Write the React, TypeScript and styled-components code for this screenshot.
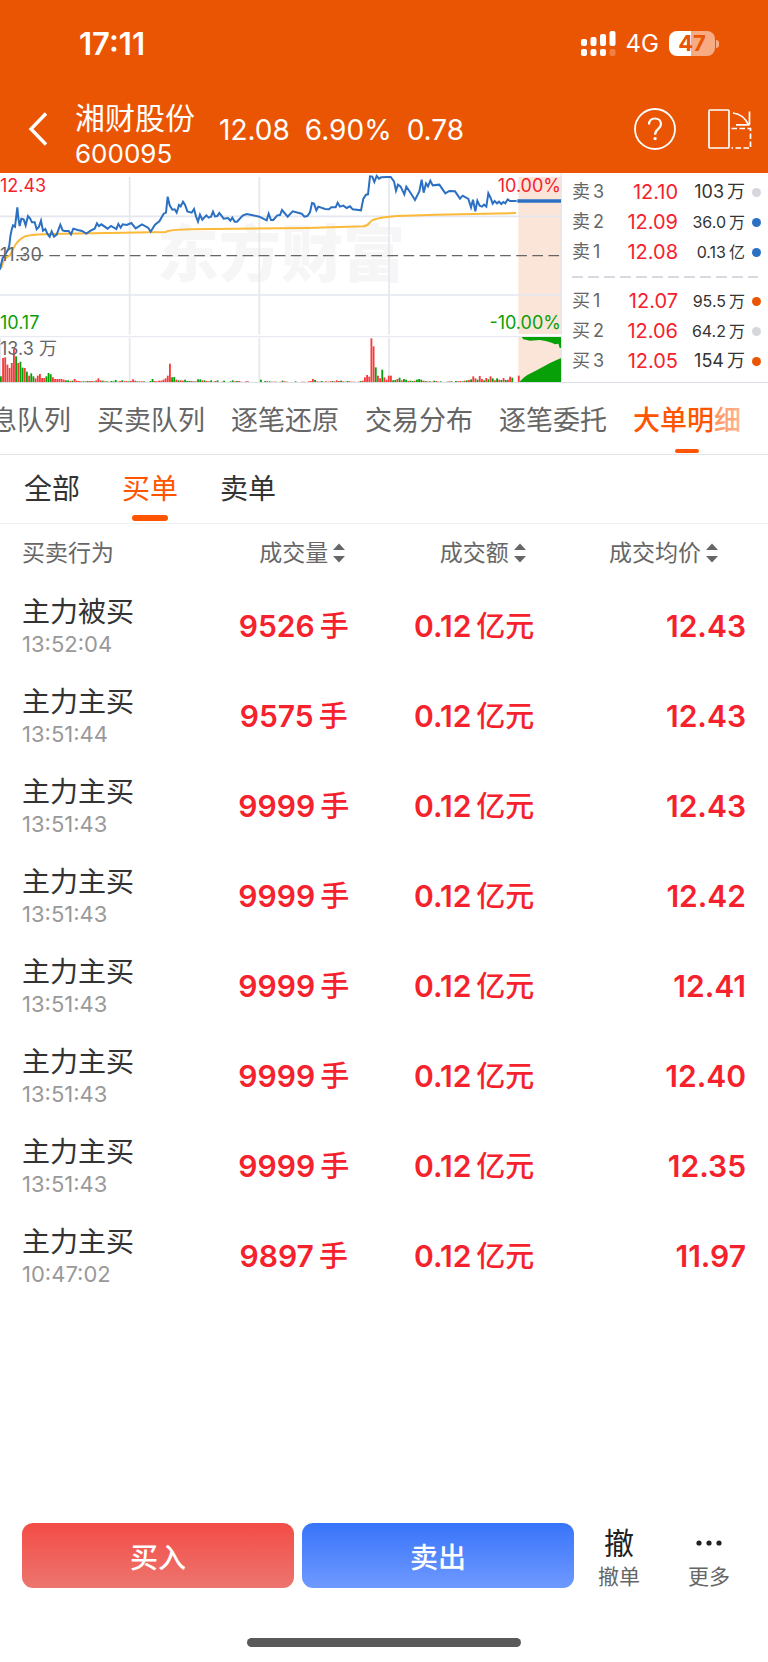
import React, { useState } from "react";
import styled, { createGlobalStyle } from "styled-components";

const RED = "#f5222d";
const GREEN = "#08a008";
const ORANGE = "#ff5500";
const BRAND = "#ea5504";
const BLUE = "#2b70c2";

const GlobalStyle = createGlobalStyle`
  * { box-sizing: border-box; }
  body {
    margin: 0;
    background: #fff;
    color: #333;
    font-family: Inter, "Noto Sans CJK SC", sans-serif;
  }
  button {
    font: inherit;
    color: inherit;
    border: 0;
    padding: 0;
    margin: 0;
    background: none;
    cursor: pointer;
  }
`;

const Page = styled.div`
  min-height: 100vh;
  display: flex;
  flex-direction: column;
  background: #fff;
  overflow: hidden;
`;

/* ---------- header ---------- */

const Header = styled.header`
  background: ${BRAND};
  color: #fff;
`;

const StatusBar = styled.div`
  height: 87px;
  padding: 0 49px 0 79px;
  display: flex;
  align-items: center;
  justify-content: space-between;
`;

const Clock = styled.time`
  font-size: 31px;
  font-weight: 600;
`;

const StatusIcons = styled.div`
  display: flex;
  align-items: center;
  gap: 10px;
  font-size: 24px;
`;

const Battery = styled.div`
  display: flex;
  align-items: center;
  gap: 1px;
`;

const BatteryBody = styled.div`
  width: 46px;
  height: 25px;
  border-radius: 8px;
  background: linear-gradient(90deg, #fff 47%, #f6ab83 47%);
  color: ${BRAND};
  font-size: 22px;
  line-height: 25px;
  font-weight: 700;
  text-align: center;
`;

const BatteryTip = styled.div`
  width: 3px;
  height: 8px;
  border-radius: 0 4px 4px 0;
  background: #f6ab83;
`;

const TitleBar = styled.div`
  height: 86px;
  padding-right: 16px;
  display: flex;
  align-items: center;
`;

const BackButton = styled.button`
  width: 75px;
  height: 60px;
  padding: 0 0 2px 28px;
  display: flex;
  align-items: center;
`;

const StockTitle = styled.h1`
  width: 144px;
  margin: 0;
  padding-top: 12px;
  font-weight: 400;
`;

const StockName = styled.span`
  display: block;
  font-size: 30px;
  line-height: 36px;
`;

const StockCode = styled.span`
  display: block;
  font-size: 26px;
  line-height: 36px;
`;

const Quote = styled.div`
  flex: 1;
  display: flex;
  gap: 15px;
  font-size: 28px;
`;

const HeaderActions = styled.div`
  padding-bottom: 2px;
  display: flex;
  align-items: center;
  gap: 32px;

  button { display: flex; }
`;

/* ---------- chart and order book ---------- */

const Market = styled.section`
  display: grid;
  grid-template-columns: minmax(0, 562fr) minmax(0, 206fr);
  border-bottom: 1px solid #dcdee6;
`;

const ChartBox = styled.div`
  position: relative;
`;

const ChartSvg = styled.svg`
  position: relative;
  display: block;
  width: 100%;
`;

const Watermark = styled.div`
  position: absolute;
  left: 0;
  right: 0;
  top: 50px;
  text-align: center;
  font-size: 62px;
  line-height: 64px;
  font-weight: 900;
  color: #f6f6f6;
`;

const AxisLabel = styled.span<{ $top: number; $color: string; $right?: boolean }>`
  position: absolute;
  top: ${(p) => p.$top}px;
  ${(p) => (p.$right ? "right: 1px;" : "left: 0;")}
  color: ${(p) => p.$color};
  font-size: 18px;
  line-height: 22px;
`;

const Book = styled.div`
  padding: 4px 7px 0 10px;
`;

const BookRow = styled.div`
  height: 30px;
  display: flex;
  align-items: center;
  line-height: 24px;
`;

const BookSide = styled.span`
  display: flex;
  gap: 3px;
  width: 36px;
  font-size: 18px;
  color: #666;
`;

const BookPrice = styled.span`
  width: 70px;
  font-size: 20px;
  text-align: right;
  color: ${RED};
`;

const BookVolume = styled.span<{ $large: boolean }>`
  flex: 1;
  display: flex;
  justify-content: flex-end;
  gap: 3px;
  font-size: ${(p) => (p.$large ? 18 : 16)}px;
`;

const BookDot = styled.i<{ $color: string }>`
  width: 9px;
  height: 9px;
  margin-left: 7px;
  border-radius: 50%;
  background: ${(p) => p.$color};
`;

const BookDivider = styled.div`
  height: 19px;
  margin-right: 3px;
  background: repeating-linear-gradient(90deg, #d8dae0 0 11px, transparent 11px 16px)
    center / 100% 2px no-repeat;
`;

/* ---------- tabs ---------- */

const Tabs = styled.nav`
  position: relative;
  height: 72px;
  padding-right: 27px;
  display: flex;
  justify-content: flex-end;
  gap: 26px;
  border-bottom: 1px solid #e4e4e4;

  &::after {
    content: "";
    position: absolute;
    right: 0;
    top: 0;
    bottom: 0;
    width: 56px;
    background: linear-gradient(90deg, rgba(255, 255, 255, 0.35), rgba(255, 255, 255, 0.6) 60%, #fff);
    pointer-events: none;
  }
`;

const Tab = styled.button<{ $active: boolean }>`
  position: relative;
  flex: none;
  font-size: 27px;
  color: ${(p) => (p.$active ? ORANGE : "#666")};
  font-weight: ${(p) => (p.$active ? 500 : 400)};

  &::after {
    content: "";
    display: ${(p) => (p.$active ? "block" : "none")};
    position: absolute;
    left: 50%;
    bottom: 1px;
    width: 24px;
    height: 4px;
    margin-left: -12px;
    border-radius: 2px;
    background: ${ORANGE};
  }
`;

const Filters = styled.div`
  height: 69px;
  padding: 0 24px;
  display: flex;
  gap: 42px;
  border-bottom: 1px solid #f0f0f0;
`;

const Filter = styled.button<{ $active: boolean }>`
  position: relative;
  padding-bottom: 4px;
  font-size: 28px;
  color: ${(p) => (p.$active ? ORANGE : "#333")};

  &::after {
    content: "";
    display: ${(p) => (p.$active ? "block" : "none")};
    position: absolute;
    left: 50%;
    bottom: 2px;
    width: 36px;
    height: 6px;
    margin-left: -18px;
    border-radius: 3px;
    background: ${ORANGE};
  }
`;

/* ---------- table ---------- */

const Table = styled.table`
  width: 100%;
  table-layout: fixed;
  border-collapse: collapse;
`;

const HeadCell = styled.th<{ $align: "left" | "center" | "right" }>`
  height: 57px;
  padding: ${(p) => ({ left: "0 0 0 22px", center: "0 0 0 17px", right: "0 50px 0 0" })[p.$align]};
  text-align: ${(p) => p.$align};
  font-size: 23px;
  line-height: 32px;
  font-weight: 400;
  color: #666;
`;

const SortButton = styled.button`
  display: inline-flex;
  align-items: center;
  gap: 5px;
  vertical-align: top;
`;

const ActionCell = styled.th`
  height: 90px;
  padding: 0 0 0 22px;
  text-align: left;
  font-weight: 400;
`;

const ActionName = styled.div`
  font-size: 28px;
  line-height: 36px;
`;

const ActionTime = styled.time`
  display: block;
  font-size: 22px;
  line-height: 28px;
  color: #999;
`;

const ValueCell = styled.td<{ $align?: "right" }>`
  padding: 0;
  padding-right: ${(p) => (p.$align ? 22 : 0)}px;
  text-align: ${(p) => p.$align ?? "center"};
  font-size: 30px;
  line-height: 36px;
  font-weight: 600;
  color: ${RED};
`;

const Unit = styled.span`
  margin-left: 5px;
  font-size: 29px;
  font-weight: 500;
`;

/* ---------- bottom bar ---------- */

const Footer = styled.footer`
  margin-top: auto;
  padding: 0 14px 0 22px;
  display: flex;
`;

const Trade = styled.div`
  flex: 1;
  display: flex;
  gap: 8px;
`;

const TradeButton = styled.button<{ $from: string; $to: string }>`
  flex: 1;
  height: 65px;
  border-radius: 11px;
  background: linear-gradient(${(p) => p.$from}, ${(p) => p.$to});
  color: #fff;
  font-size: 28px;
  font-weight: 500;
`;

const ToolButton = styled.button`
  width: 90px;
  display: flex;
  flex-direction: column;
  align-items: center;
  color: #666;
  font-size: 21px;
  line-height: 28px;
`;

const ToolGlyph = styled.span`
  height: 40px;
  display: flex;
  align-items: center;
  color: #222;
  font-size: 30px;
`;

const HomeIndicator = styled.div`
  width: 274px;
  height: 9px;
  margin: 47px auto 15px;
  border-radius: 5px;
  background: #5a5a5a;
`;

/* ---------- data ---------- */

const PRICE_LINE =
  "0,305 3,290 8,270 14,262 20,252 25,243 28,232 31,205 35,185 39,172 45,176 52,118 55,150 59,174 64,152 71,154 77,172 84,144 90,151 96,163 104,163 110,184 117,176 123,158 129,188 136,183 142,197 149,206 155,190 162,206 170,200 181,170 188,187 194,189 206,189 213,199 220,182 233,186 246,189 259,197 272,188 284,182 291,166 297,174 304,169 323,182 333,174 349,183 355,168 362,179 368,169 380,171 394,165 407,181 426,169 445,180 452,191 465,170 478,160 491,137 498,134 503,86 509,112 517,125 524,124 530,134 537,111 542,115 549,101 555,110 562,130 575,134 582,123 588,145 594,161 600,140 607,155 619,142 626,149 633,146 639,131 645,145 652,144 658,135 671,152 684,150 691,158 697,149 704,161 711,161 728,143 740,138 755,141 778,146 800,157 806,137 813,156 820,156 832,142 840,141 846,126 863,146 878,130 905,137 913,146 922,144 930,133 936,105 942,107 949,127 955,116 975,123 987,124 994,118 1007,118 1013,104 1020,116 1030,113 1040,120 1050,115 1058,124 1083,127 1090,92 1098,80 1104,79 1110,25 1117,26 1123,42 1130,24 1137,32 1144,28 1162,27 1172,27 1182,40 1188,68 1194,50 1202,56 1213,79 1219,56 1232,75 1245,96 1258,70 1265,35 1271,74 1278,46 1284,55 1291,38 1298,52 1318,50 1336,76 1348,69 1365,70 1380,92 1388,83 1405,93 1413,118 1419,95 1426,130 1432,98 1439,113 1446,116 1452,110 1459,116 1465,76 1472,90 1478,107 1484,99 1491,106 1497,101 1504,108 1510,102 1516,106 1523,94 1530,99 1550,99";

const AVERAGE_LINE =
  "M4,300 C10,275 16,268 30,262 C42,235 52,215 75,205 C95,198 120,199 150,198 L498,192 C505,186 530,185 570,184 L920,180 L1090,175 C1110,173 1104,164 1118,156 C1135,150 1160,146 1190,144 L1310,140 L1548,135";

/* Minute volumes: rising minutes are positive, falling ones negative. */
const VOLUMES = [
  -18, 73, 75, 53, 43, 58, 100, -78, 58, -62, -44, 43, -32, 20, -27, -18, 12, 20, 25, 13, 13, -18, -28, -24, 15, 10, 10,
  10, 10, 8, -6, -6, 4, -5, 10, 5, 4, 3, -3, 3, -4, 4, 4, -3, 6, 12, 6, -5, 3, -3, 2, -4, -3, -7, 2, 4, -6, 3, 4, -3, 4,
  9, 5, -3, 3, 3, -3, 1, 1, -4, -10, 4, 3, 5, 5, 8, 12, 20, 56, -15, -16, 8, -6, 6, 5, -8, -4, -4, 4, -3, 3, -9, -9, 6,
  -6, 4, 3, -6, 2, 4, -6, 1, 2, -5, 1, 1, -3, -6, 3, -4, 4, 2, 1, 3, 3, 1, 1, 1, 1, 1, -8, 1, -4, 3, -3, 2, 2, -2, 1, 2,
  -5, 3, 2, 1, 1, 1, -3, 1, 1, 2, 2, 1, 3, 4, 10, -7, 3, 2, -4, 2, 3, 2, 3, -4, 3, 6, 4, -5, 3, 2, -4, 3, 2, 2, 1, 2, -4,
  5, 15, 22, 17, 132, 108, -45, 20, 12, -38, 15, 8, 20, 20, -6, -7, 10, -14, 6, -10, -8, 4, -5, -4, 5, -8, -10, -8, 5,
  -4, 3, -3, 2, -5, 4, 2, -3, 1, 1, -2, 3, -3, 1, -4, 3, 4, -3, 5, -6, 7, -9, 18, 12, -8, 19, 10, -6, 13, -9, 18, -12,
  6, -12, 8, -7, 13, -7, 8, 17, -14, 0, 0, 20,
];

const SELLS = [
  { side: "卖", level: 3, price: "12.10", volume: "103", unit: "万", dot: "#d5d7dc" },
  { side: "卖", level: 2, price: "12.09", volume: "36.0", unit: "万", dot: BLUE },
  { side: "卖", level: 1, price: "12.08", volume: "0.13", unit: "亿", dot: BLUE },
];

const BUYS = [
  { side: "买", level: 1, price: "12.07", volume: "95.5", unit: "万", dot: BRAND },
  { side: "买", level: 2, price: "12.06", volume: "64.2", unit: "万", dot: "#d5d7dc" },
  { side: "买", level: 3, price: "12.05", volume: "154", unit: "万", dot: BRAND },
];

const TABS = ["消息队列", "买卖队列", "逐笔还原", "交易分布", "逐笔委托", "大单明细"];
const FILTERS = ["全部", "买单", "卖单"];

const ORDERS = [
  ["主力被买", "13:52:04", "9526", "12.43"],
  ["主力主买", "13:51:44", "9575", "12.43"],
  ["主力主买", "13:51:43", "9999", "12.43"],
  ["主力主买", "13:51:43", "9999", "12.42"],
  ["主力主买", "13:51:43", "9999", "12.41"],
  ["主力主买", "13:51:43", "9999", "12.40"],
  ["主力主买", "13:51:43", "9999", "12.35"],
  ["主力主买", "10:47:02", "9897", "11.97"],
];

/* ---------- parts ---------- */

function SignalIcon() {
  return (
    <svg width="35" height="25" viewBox="0 0 35 25" fill="#fff" aria-hidden="true">
      <rect x="0" y="8" width="6" height="7" rx="2" />
      <rect x="9.5" y="6" width="6" height="9" rx="2" />
      <rect x="19" y="3" width="6" height="12" rx="2" />
      <rect x="28.5" y="0" width="6" height="15" rx="2" />
      <rect x="0" y="18" width="6" height="7" rx="2" />
      <rect x="9.5" y="18" width="6" height="7" rx="2" />
      <rect x="19" y="18" width="6" height="7" rx="2" />
      <rect x="28.5" y="18" width="6" height="7" rx="2" opacity="0.25" />
    </svg>
  );
}

function BackIcon() {
  return (
    <svg width="20" height="34" viewBox="0 0 20 34" fill="none" stroke="#fff" strokeWidth="3.4" aria-hidden="true">
      <path d="M18 1.5 3 17l15 15.5" />
    </svg>
  );
}

function HelpIcon() {
  return (
    <svg width="42" height="42" viewBox="0 0 42 42" fill="none" stroke="#fff" strokeWidth="1.8" aria-hidden="true">
      <circle cx="21" cy="21" r="20" />
      <path d="M15 16.5c0-3.6 2.5-6 6-6s6 2.2 6 5.4c0 2.6-1.3 3.9-3.2 5.5-1.9 1.5-2.7 2.6-2.7 5.3" strokeWidth="2.2" />
      <circle cx="21.1" cy="30.6" r="1.6" fill="#fff" stroke="none" />
    </svg>
  );
}

function RotateIcon() {
  return (
    <svg width="44" height="40" viewBox="0 0 44 40" fill="none" stroke="#fff" strokeWidth="1.7" aria-hidden="true">
      <rect x="1" y="1" width="20" height="38" rx="1" />
      <path d="M25 4c8 1 12 4.5 15.5 11.5M41.5 2.5v13.3M28 15.8h13.5" />
      <path d="M23.5 19.5h19V39h-19" strokeDasharray="5.5 2.5" />
    </svg>
  );
}

function SortIcon() {
  return (
    <svg width="12" height="20" viewBox="0 0 12 20" fill="#666" aria-hidden="true">
      <path d="M6 0.5 12 7H0z" />
      <path d="M6 19.5 12 13H0z" />
    </svg>
  );
}

function MinuteChart() {
  return (
    <ChartBox>
      <Watermark aria-hidden="true">东方财富</Watermark>
      <ChartSvg viewBox="0 15 1686 627" role="img" aria-label="分时走势">
        <rect x="1555" y="27" width="128" height="471" fill="#fbe5d9" />
        <rect x="1555" y="507" width="128" height="136" fill="#fbe5d9" />
        <g stroke="#e4e7ef" strokeWidth="5">
          <path d="M0 145H1686M0 381H1686" />
          <path d="M0 506H1686" strokeWidth="3" />
          <path d="M389 27V500M778 27V500M1167 27V500M1684 15V500" />
          <path d="M389 510V643M778 510V643M1167 510V643M1684 510V643M1 510V643" />
        </g>
        <path d="M148 263H1683" stroke="#666" strokeWidth="4" strokeDasharray="32 16.3" fill="none" />
        <path d="M0 263H26M50 263H78M96 263H130" stroke="#666" strokeWidth="4" />
        <path d={AVERAGE_LINE} fill="none" stroke="#fbb93a" strokeWidth="6" />
        <polyline points={PRICE_LINE} fill="none" stroke={BLUE} strokeWidth="6" />
        <path d="M1552 99H1683" stroke={BLUE} strokeWidth="11" />
        {VOLUMES.map((v, i) => (
          <rect
            key={i}
            x={i * 6.5}
            y={643 - Math.abs(v)}
            width="5.5"
            height={Math.abs(v)}
            fill={v > 0 ? "#f53b3b" : GREEN}
          />
        ))}
        <path
          d="M1565 507H1683V540H1679L1675 527 1665 529 1655 524 1640 520 1620 516 1590 518 1570 514Z"
          fill={GREEN}
        />
        <path d="M1557 643 1570 630 1582 621 1610 607 1650 585 1683 570V643Z" fill={GREEN} />
      </ChartSvg>
      <AxisLabel $top={2} $color={RED}>12.43</AxisLabel>
      <AxisLabel $top={71} $color="#666">11.30</AxisLabel>
      <AxisLabel $top={139} $color={GREEN}>10.17</AxisLabel>
      <AxisLabel $top={165} $color="#666">13.3 万</AxisLabel>
      <AxisLabel $top={2} $color={RED} $right>10.00%</AxisLabel>
      <AxisLabel $top={139} $color={GREEN} $right>-10.00%</AxisLabel>
    </ChartBox>
  );
}

function BookLine({ row }: { row: (typeof SELLS)[number] }) {
  return (
    <BookRow>
      <BookSide>
        <span>{row.side}</span>
        <span>{row.level}</span>
      </BookSide>
      <BookPrice>{row.price}</BookPrice>
      <BookVolume $large={!row.volume.includes(".")}>
        <span>{row.volume}</span>
        <span>{row.unit}</span>
      </BookVolume>
      <BookDot $color={row.dot} />
    </BookRow>
  );
}

export default function App() {
  const [tab, setTab] = useState("大单明细");
  const [filter, setFilter] = useState("买单");

  return (
    <Page>
      <GlobalStyle />
      <Header>
        <StatusBar>
          <Clock>17:11</Clock>
          <StatusIcons>
            <SignalIcon />
            <span>4G</span>
            <Battery>
              <BatteryBody>47</BatteryBody>
              <BatteryTip />
            </Battery>
          </StatusIcons>
        </StatusBar>
        <TitleBar>
          <BackButton aria-label="返回">
            <BackIcon />
          </BackButton>
          <StockTitle>
            <StockName>湘财股份</StockName>
            <StockCode>600095</StockCode>
          </StockTitle>
          <Quote>
            <span>12.08</span>
            <span>6.90%</span>
            <span>0.78</span>
          </Quote>
          <HeaderActions>
            <button aria-label="帮助">
              <HelpIcon />
            </button>
            <button aria-label="横屏">
              <RotateIcon />
            </button>
          </HeaderActions>
        </TitleBar>
      </Header>

      <Market>
        <MinuteChart />
        <Book>
          {SELLS.map((row) => (
            <BookLine key={row.price} row={row} />
          ))}
          <BookDivider />
          {BUYS.map((row) => (
            <BookLine key={row.price} row={row} />
          ))}
        </Book>
      </Market>

      <Tabs>
        {TABS.map((name) => (
          <Tab key={name} $active={name === tab} onClick={() => setTab(name)}>
            {name}
          </Tab>
        ))}
      </Tabs>
      <Filters>
        {FILTERS.map((name) => (
          <Filter key={name} $active={name === filter} onClick={() => setFilter(name)}>
            {name}
          </Filter>
        ))}
      </Filters>

      <Table>
        <colgroup>
          <col width="26.5%" />
          <col width="23.5%" />
          <col width="23.5%" />
          <col width="26.5%" />
        </colgroup>
        <thead>
          <tr>
            <HeadCell $align="left">买卖行为</HeadCell>
            <HeadCell $align="center">
              <SortButton>成交量<SortIcon /></SortButton>
            </HeadCell>
            <HeadCell $align="center">
              <SortButton>成交额<SortIcon /></SortButton>
            </HeadCell>
            <HeadCell $align="right">
              <SortButton>成交均价<SortIcon /></SortButton>
            </HeadCell>
          </tr>
        </thead>
        <tbody>
          {ORDERS.map(([action, time, volume, price], i) => (
            <tr key={i}>
              <ActionCell scope="row">
                <ActionName>{action}</ActionName>
                <ActionTime>{time}</ActionTime>
              </ActionCell>
              <ValueCell>{volume}<Unit>手</Unit></ValueCell>
              <ValueCell>0.12<Unit>亿元</Unit></ValueCell>
              <ValueCell $align="right">{price}</ValueCell>
            </tr>
          ))}
        </tbody>
      </Table>

      <Footer>
        <Trade>
          <TradeButton $from="#f34c46" $to="#ed756f">买入</TradeButton>
          <TradeButton $from="#3874fa" $to="#6f99ff">卖出</TradeButton>
        </Trade>
        <ToolButton>
          <ToolGlyph>撤</ToolGlyph>
          撤单
        </ToolButton>
        <ToolButton>
          <ToolGlyph>
            <svg width="26" height="6" viewBox="0 0 26 6" fill="#222" aria-hidden="true">
              <circle cx="3" cy="3" r="2.6" />
              <circle cx="13" cy="3" r="2.6" />
              <circle cx="23" cy="3" r="2.6" />
            </svg>
          </ToolGlyph>
          更多
        </ToolButton>
      </Footer>
      <HomeIndicator />
    </Page>
  );
}
